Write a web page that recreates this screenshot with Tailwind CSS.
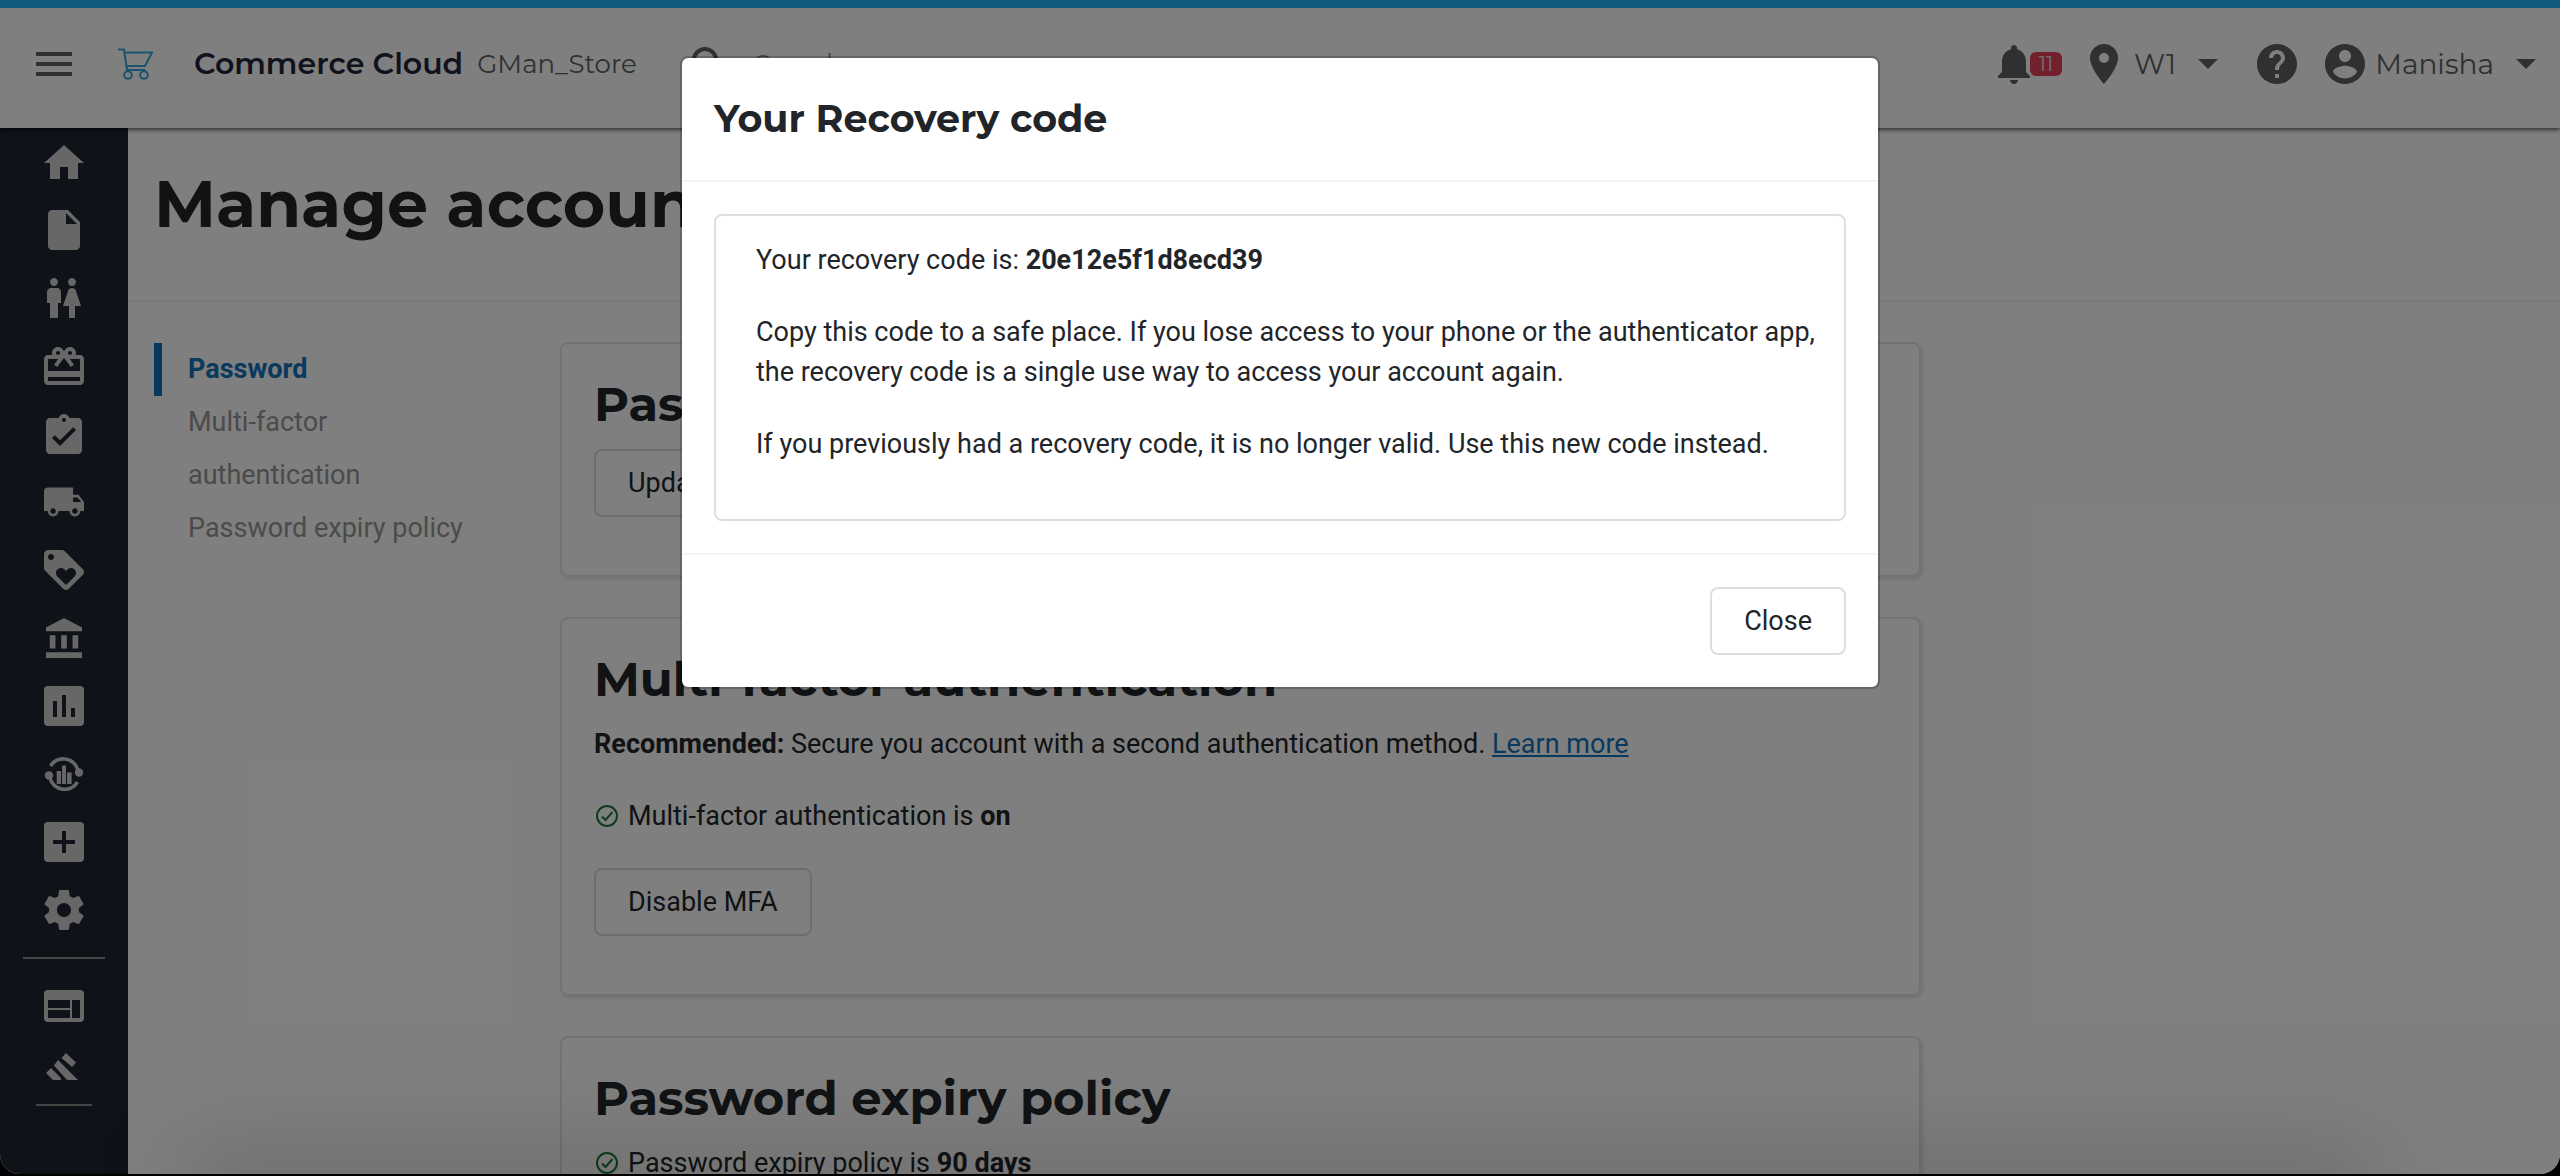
<!DOCTYPE html>
<html lang="en">
<head>
<meta charset="utf-8">
<title>Manage account</title>
<script src="https://cdn.jsdelivr.net/npm/@tailwindcss/browser@4"></script>
</head>
<body class="h-screen overflow-hidden bg-black font-['Roboto',sans-serif] text-[27px] leading-[40px] text-[#212529]">
<div class="relative flex h-[calc(100vh-2px)] flex-col overflow-hidden rounded-b-[20px] bg-white">

  <header class="relative z-10 flex h-32 shrink-0 items-center border-t-8 border-[#21b8fc] bg-white pb-2 pl-9 pr-6 font-['Montserrat',sans-serif] text-[#606060] shadow-[0_2px_4px_rgba(0,0,0,0.6)]">
    <button type="button" aria-label="Menu" class="flex h-6 w-9 flex-col justify-between">
      <span class="h-1 w-full bg-[#606060]"></span><span class="h-1 w-full bg-[#606060]"></span><span class="h-1 w-full bg-[#606060]"></span>
    </button>
    <svg class="ml-[46px] h-8 w-9" viewBox="0 0 36 32" fill="none" stroke="#35a8d8" stroke-width="2"><path d="M0 1.500H6L9 22H27M6.500 4.500H34L27 18H8.500M9 19V23"/><circle cx="10" cy="27" r="3.800"/><circle cx="26" cy="27" r="3.800"/></svg>
    <span class="ml-10 text-[30px] font-semibold text-[#20243a]">Commerce Cloud</span>
    <span class="ml-3.5 text-[26px]">GMan_Store</span>
    <label class="ml-[54px] flex items-center gap-7">
      <svg class="size-9" viewBox="0 0 36 36" fill="none" stroke="#606060" stroke-width="4"><circle cx="14" cy="14" r="11"/><path d="M22 22l12 12"/></svg>
      <input type="search" aria-label="Search" placeholder="Search" class="w-80 bg-transparent text-[26px] outline-none placeholder:text-[#8a8a8a]">
    </label>
    <div class="ml-auto flex items-center">
      <button type="button" aria-label="Notifications" class="flex items-center">
        <svg class="h-10 w-8" viewBox="4 2 16 20" fill="#606060"><path d="M12 22c1.100 0 2-.900 2-2h-4c0 1.100.900 2 2 2zm6-6v-5c0-3.070-1.630-5.640-4.500-6.320V4c0-.830-.670-1.500-1.500-1.500s-1.500.670-1.500 1.500v.680C7.640 5.360 6 7.920 6 11v5l-2 2v1h16v-1l-2-2z"/></svg>
        <span class="h-6 w-8 rounded-md bg-[#e84058] text-center text-[20px] leading-6 text-[#e0e0e0]">11</span>
      </button>
      <button type="button" class="ml-7 flex items-center">
        <svg class="h-10 w-7" viewBox="5 2 14 20" fill="#606060"><path d="M12 2C8.130 2 5 5.130 5 9c0 5.250 7 13 7 13s7-7.750 7-13c0-3.870-3.130-7-7-7zm0 9.500a2.500 2.500 0 110-5 2.500 2.500 0 010 5z"/></svg>
        <span class="ml-4 text-[28px]">W1</span>
        <svg class="ml-[22px] h-[10px] w-5" viewBox="0 0 20 10" fill="#606060"><path d="M0 0h20L10 10z"/></svg>
      </button>
      <button type="button" aria-label="Help" class="ml-[39px]">
        <svg class="size-10" viewBox="2 2 20 20" fill="#606060"><path d="M12 2C6.480 2 2 6.480 2 12s4.480 10 10 10 10-4.480 10-10S17.520 2 12 2zm1 17h-2v-2h2v2zm2.070-7.750l-.900.920C13.450 12.900 13 13.500 13 15h-2v-.500c0-1.100.450-2.100 1.170-2.830l1.240-1.260c.370-.360.590-.860.590-1.410 0-1.100-.900-2-2-2s-2 .900-2 2H8c0-2.210 1.790-4 4-4s4 1.790 4 4c0 .880-.360 1.680-.930 2.250z"/></svg>
      </button>
      <button type="button" class="ml-7 flex items-center">
        <svg class="size-10" viewBox="2 2 20 20" fill="#606060"><path d="M12 2C6.480 2 2 6.480 2 12s4.480 10 10 10 10-4.480 10-10S17.520 2 12 2zm0 3c1.660 0 3 1.340 3 3s-1.340 3-3 3-3-1.340-3-3 1.340-3 3-3zm0 14.200c-2.500 0-4.710-1.280-6-3.220.030-1.990 4-3.080 6-3.080 1.990 0 5.970 1.090 6 3.080-1.290 1.940-3.500 3.220-6 3.220z"/></svg>
        <span class="ml-2.5 text-[28px]">Manisha</span>
        <svg class="ml-[22px] h-[10px] w-5" viewBox="0 0 20 10" fill="#606060"><path d="M0 0h20L10 10z"/></svg>
      </button>
    </div>
  </header>

  <div class="flex min-h-0 flex-1">
    <nav aria-label="Main" class="flex w-32 shrink-0 flex-col items-center bg-[#1e2432]">
      <a href="#" aria-label="Home" class="flex h-[68px] shrink-0 items-center"><svg class="h-[34px] w-10" viewBox="2 3 20 17" fill="#cecece"><path d="M10 20v-6h4v6h5v-8h3L12 3 2 12h3v8z"/></svg></a>
      <a href="#" aria-label="Orders" class="flex h-[68px] shrink-0 items-center"><svg class="h-10 w-8" viewBox="4 2 16 20" fill="#cecece"><path d="M14 2H6c-1.100 0-2 .900-2 2v16c0 1.100.900 2 2 2h12c1.100 0 2-.900 2-2V8l-6-6zm-1 7V3.500L18.500 9H13z"/></svg></a>
      <a href="#" aria-label="Customers" class="flex h-[68px] shrink-0 items-center"><svg class="h-10 w-9" viewBox="3.500 2 18 20" fill="#cecece"><path d="M5.500 22v-7.500H4V9c0-1.100.900-2 2-2h3c1.100 0 2 .900 2 2v5.500H9.500V22h-4zM18 22v-6h3l-2.540-7.630C18.180 7.550 17.420 7 16.560 7h-.120c-.860 0-1.630.550-1.900 1.370L12 16h3v6h3zM7.500 6c1.110 0 2-.890 2-2s-.890-2-2-2-2 .890-2 2 .890 2 2 2zm9 0c1.110 0 2-.890 2-2s-.890-2-2-2-2 .890-2 2 .890 2 2 2z"/></svg></a>
      <a href="#" aria-label="Gift cards" class="flex h-[68px] shrink-0 items-center"><svg class="h-[38px] w-10" viewBox="2 2 20 19" fill="#cecece"><path d="M20 6h-2.180c.110-.310.180-.650.180-1 0-1.660-1.340-3-3-3-1.050 0-1.960.540-2.500 1.350l-.500.670-.500-.680C10.960 2.540 10.050 2 9 2 7.340 2 6 3.340 6 5c0 .350.070.690.180 1H4c-1.110 0-1.990.890-1.990 2L2 19c0 1.110.890 2 2 2h16c1.110 0 2-.890 2-2V8c0-1.110-.890-2-2-2zm-5-2c.550 0 1 .450 1 1s-.450 1-1 1-1-.450-1-1 .450-1 1-1zM9 4c.550 0 1 .450 1 1s-.450 1-1 1-1-.450-1-1 .450-1 1-1zm11 15H4v-2h16v2zm0-5H4V8h5.080L7 10.830 8.620 12 11 8.760l1-1.360 1 1.360L15.380 12 17 10.830 14.920 8H20v6z"/></svg></a>
      <a href="#" aria-label="Tasks" class="flex h-[68px] shrink-0 items-center"><svg class="h-10 w-9" viewBox="3 1 18 20" fill="#cecece"><path d="M19 3h-4.180C14.400 1.840 13.300 1 12 1s-2.400.840-2.820 2H5c-1.100 0-2 .900-2 2v14c0 1.100.900 2 2 2h14c1.100 0 2-.900 2-2V5c0-1.100-.900-2-2-2zm-7 0c.550 0 1 .450 1 1s-.450 1-1 1-1-.450-1-1 .450-1 1-1zm-2 14l-4-4 1.410-1.410L10 14.170l6.590-6.590L18 9l-8 8z"/></svg></a>
      <a href="#" aria-label="Shipping" class="flex h-[68px] shrink-0 items-center"><svg class="h-[30px] w-10" viewBox="1 4 22 16" fill="#cecece"><path d="M20 8h-3V4H3c-1.100 0-2 .900-2 2v11h2c0 1.660 1.340 3 3 3s3-1.340 3-3h6c0 1.660 1.340 3 3 3s3-1.340 3-3h2v-5l-3-4zM6 18.500c-.830 0-1.500-.670-1.500-1.500s.670-1.500 1.500-1.500 1.500.670 1.500 1.500-.670 1.500-1.500 1.500zm13.500-9l1.960 2.500H17V9.500h2.500zm-1.500 9c-.830 0-1.500-.670-1.500-1.500s.670-1.500 1.500-1.500 1.500.670 1.500 1.500-.670 1.500-1.500 1.500z"/></svg></a>
      <a href="#" aria-label="Promotions" class="flex h-[68px] shrink-0 items-center"><svg class="size-10" viewBox="2 2 20 20" fill="#cecece"><path d="M21.410 11.580l-9-9C12.050 2.220 11.550 2 11 2H4c-1.100 0-2 .900-2 2v7c0 .550.220 1.050.590 1.420l9 9c.360.360.860.580 1.410.580.550 0 1.050-.220 1.410-.590l7-7c.370-.360.590-.860.590-1.410 0-.550-.230-1.060-.590-1.420zM5.500 7C4.670 7 4 6.330 4 5.500S4.670 4 5.500 4 7 4.670 7 5.500 6.330 7 5.500 7zm11.770 8.270L13 19.540l-4.270-4.270C8.280 14.810 8 14.190 8 13.500c0-1.380 1.120-2.500 2.500-2.500.690 0 1.320.280 1.770.740l.730.720.730-.730c.450-.450 1.080-.730 1.770-.730 1.380 0 2.500 1.120 2.500 2.500 0 .690-.280 1.320-.730 1.770z"/></svg></a>
      <a href="#" aria-label="Finance" class="flex h-[68px] shrink-0 items-center"><svg class="h-10 w-9" viewBox="2 1 19 21" fill="#cecece"><path d="M4 10v7h3v-7H4zm6 0v7h3v-7h-3zM2 22h19v-3H2v3zm14-12v7h3v-7h-3zm-4.500-9L2 6v2h19V6l-9.500-5z"/></svg></a>
      <a href="#" aria-label="Reports" class="flex h-[68px] shrink-0 items-center"><svg class="size-10" viewBox="0 0 40 40" fill="#cecece" fill-rule="evenodd"><path d="M4 0H36a4 4 0 014 4V36a4 4 0 01-4 4H4a4 4 0 01-4-4V4a4 4 0 014-4zM9 15V31h4V15zM18 9V31h4V9zM27 22V31h4V22z"/></svg></a>
      <a href="#" aria-label="Analytics" class="flex h-[68px] shrink-0 items-center"><svg class="h-[34px] w-10" viewBox="0 0 40 34" fill="#cecece"><path d="M12.700 14H17V27H12.700zM18 8.500H22V27H18zM23 15.500H27.600V27H23z"/><circle cx="35" cy="15.500" r="4.200"/><circle cx="5" cy="18.500" r="4.200"/><path d="M6.500 9C13 -1 29 -1 34 13M5.500 20C10 35 27 36 33.500 25" fill="none" stroke="#cecece" stroke-width="3.600"/></svg></a>
      <a href="#" aria-label="Add" class="flex h-[68px] shrink-0 items-center"><svg class="size-10" viewBox="0 0 40 40" fill="#cecece" fill-rule="evenodd"><path d="M4 0H36a4 4 0 014 4V36a4 4 0 01-4 4H4a4 4 0 01-4-4V4a4 4 0 014-4zM18 9V18H9V22H18V31H22V22H31V18H22V9z"/></svg></a>
      <a href="#" aria-label="Settings" class="flex h-[68px] shrink-0 items-center"><svg class="size-10" viewBox="2 2 20 20" fill="#cecece"><path d="M19.430 12.980c.040-.320.070-.640.070-.980s-.030-.660-.070-.980l2.110-1.650c.190-.150.240-.420.120-.640l-2-3.460c-.120-.220-.390-.300-.610-.220l-2.490 1c-.520-.400-1.080-.730-1.690-.980l-.380-2.650C14.460 2.180 14.250 2 14 2h-4c-.250 0-.460.180-.490.420l-.380 2.650c-.610.250-1.170.590-1.690.980l-2.490-1c-.230-.090-.490 0-.610.220l-2 3.460c-.130.220-.070.490.120.640l2.110 1.650c-.040.320-.070.650-.070.980s.030.660.070.980l-2.110 1.650c-.190.150-.240.420-.120.640l2 3.460c.120.220.390.300.610.220l2.490-1c.520.400 1.080.730 1.690.980l.380 2.650c.030.240.240.420.490.420h4c.250 0 .460-.180.490-.420l.380-2.650c.610-.250 1.170-.590 1.690-.980l2.490 1c.230.090.490 0 .610-.220l2-3.460c.120-.220.070-.490-.120-.640l-2.110-1.650zM12 15.500c-1.930 0-3.500-1.570-3.500-3.500s1.570-3.500 3.500-3.500 3.500 1.570 3.500 3.500-1.570 3.500-3.500 3.500z"/></svg></a>
      <hr class="my-[13px] w-[82px] shrink-0 border-t-2 border-[#8c8c8c]">
      <a href="#" aria-label="Storefront" class="flex h-[68px] shrink-0 items-center"><svg class="h-8 w-10" viewBox="0 0 40 32" fill="#cecece" fill-rule="evenodd"><path d="M4 0H36a4 4 0 014 4V28a4 4 0 01-4 4H4a4 4 0 01-4-4V4a4 4 0 014-4zM4 10V18H26V10zM4 20V28H26V20zM28 10V28H36V10z"/></svg></a>
      <a href="#" aria-label="Auctions" class="flex h-[52px] shrink-0 items-center pr-1"><svg class="h-[27px] w-8" viewBox="0 0 32 27" fill="#cecece"><path d="M20 0L30 9.500 26 14 15.500 5zM12 7L32 27H21L8 12.500zM5 15L15 25V27H7L0 20z"/></svg></a>
      <hr class="mt-3 w-14 shrink-0 border-t-2 border-[#8c8c8c]">
    </nav>

    <main class="min-w-0 flex-1">
      <div class="h-[174px] border-b-2 border-[#f2f2f2] pl-[26px] pt-9">
        <h1 class="font-['Montserrat',sans-serif] text-[65px] font-bold leading-[80px]">Manage account</h1>
      </div>
      <div class="flex pl-[26px] pt-10">
        <nav aria-label="Account sections" class="mr-20 w-[326px] shrink-0 pt-px leading-[53px]">
          <a href="#password" class="block border-l-8 border-[#1272bb] pl-[26px] font-bold text-[#1272bb]">Password</a>
          <a href="#mfa" class="block w-[300px] pl-[34px] pr-16 text-[#969696]">Multi-factor authentication</a>
          <a href="#expiry" class="block pl-[34px] text-[#969696]">Password expiry policy</a>
        </nav>
        <div class="flex w-[1361px] flex-col gap-10">
          <section id="password" class="rounded-lg border-2 border-[#e4e4e4] px-8 pb-[58px] pt-8 shadow-[2px_2px_4px_rgba(0,0,0,0.12)]">
            <h2 class="mb-4 font-['Montserrat',sans-serif] text-[48px] font-bold leading-[57px]">Password</h2>
            <button type="button" class="h-[68px] rounded-lg border-2 border-[#dcdcdc] px-8">Update password</button>
          </section>
          <section id="mfa" class="rounded-lg border-2 border-[#e4e4e4] px-8 pb-[58px] pt-8 shadow-[2px_2px_4px_rgba(0,0,0,0.12)]">
            <h2 class="mb-4 font-['Montserrat',sans-serif] text-[48px] font-bold leading-[57px]">Multi-factor authentication</h2>
            <p class="mb-8"><b>Recommended:</b> Secure you account with a second authentication method. <a href="#" class="text-[#1272bb] underline">Learn more</a></p>
            <div class="mb-8 flex items-center gap-2.5 pl-0.5">
              <svg class="size-[22px]" viewBox="0 0 22 22" fill="none" stroke="#1a7a36" stroke-width="2"><circle cx="11" cy="11" r="10"/><path d="M6 11.500L9.500 15 16.500 7"/></svg>
              <p>Multi-factor authentication is <b>on</b></p>
            </div>
            <button type="button" class="h-[68px] rounded-lg border-2 border-[#dcdcdc] px-8">Disable MFA</button>
          </section>
          <section id="expiry" class="rounded-lg border-2 border-[#e4e4e4] px-8 pb-[58px] pt-8 shadow-[2px_2px_4px_rgba(0,0,0,0.12)]">
            <h2 class="mb-4 font-['Montserrat',sans-serif] text-[48px] font-bold leading-[57px]">Password expiry policy</h2>
            <div class="flex items-center gap-2.5 pl-0.5">
              <svg class="size-[22px]" viewBox="0 0 22 22" fill="none" stroke="#1a7a36" stroke-width="2"><circle cx="11" cy="11" r="10"/><path d="M6 11.500L9.500 15 16.500 7"/></svg>
              <p>Password expiry policy is <b>90 days</b></p>
            </div>
          </section>
        </div>
      </div>
    </main>
  </div>

  <!-- soft shade along the lower edge of the window -->
  <div class="absolute inset-x-48 top-full z-20 h-2 shadow-[0_0_90px_10px_rgba(0,0,0,0.35)]"></div>

  <div class="absolute inset-0 z-20 flex items-start justify-center bg-black/50 pt-14">
    <div role="dialog" aria-modal="true" aria-labelledby="dialog-title" class="w-[1200px] rounded-lg border-2 border-black/20 bg-white bg-clip-padding">
      <div class="border-b-2 border-[#f4f4f4] px-8 py-9"><h2 id="dialog-title" class="font-['Montserrat',sans-serif] text-[38px] font-bold leading-[50px]">Your Recovery code</h2></div>
      <div class="p-8"><div class="rounded-lg border-2 border-[#dedede] pb-[23px] pl-10 pr-6 pt-6">
        <p class="mb-8">Your recovery code is: <b>20e12e5f1d8ecd39</b></p>
        <p class="mb-8">Copy this code to a safe place. If you lose access to your phone or the authenticator app, the recovery code is a single use way to access your account again.</p>
        <p class="mb-8">If you previously had a recovery code, it is no longer valid. Use this new code instead.</p>
      </div></div>
      <div class="flex justify-end border-t-2 border-[#f4f4f4] p-8"><button type="button" class="h-[68px] rounded-lg border-2 border-[#dedede] px-8">Close</button></div>
    </div>
  </div>
</div>
</body>
</html>
